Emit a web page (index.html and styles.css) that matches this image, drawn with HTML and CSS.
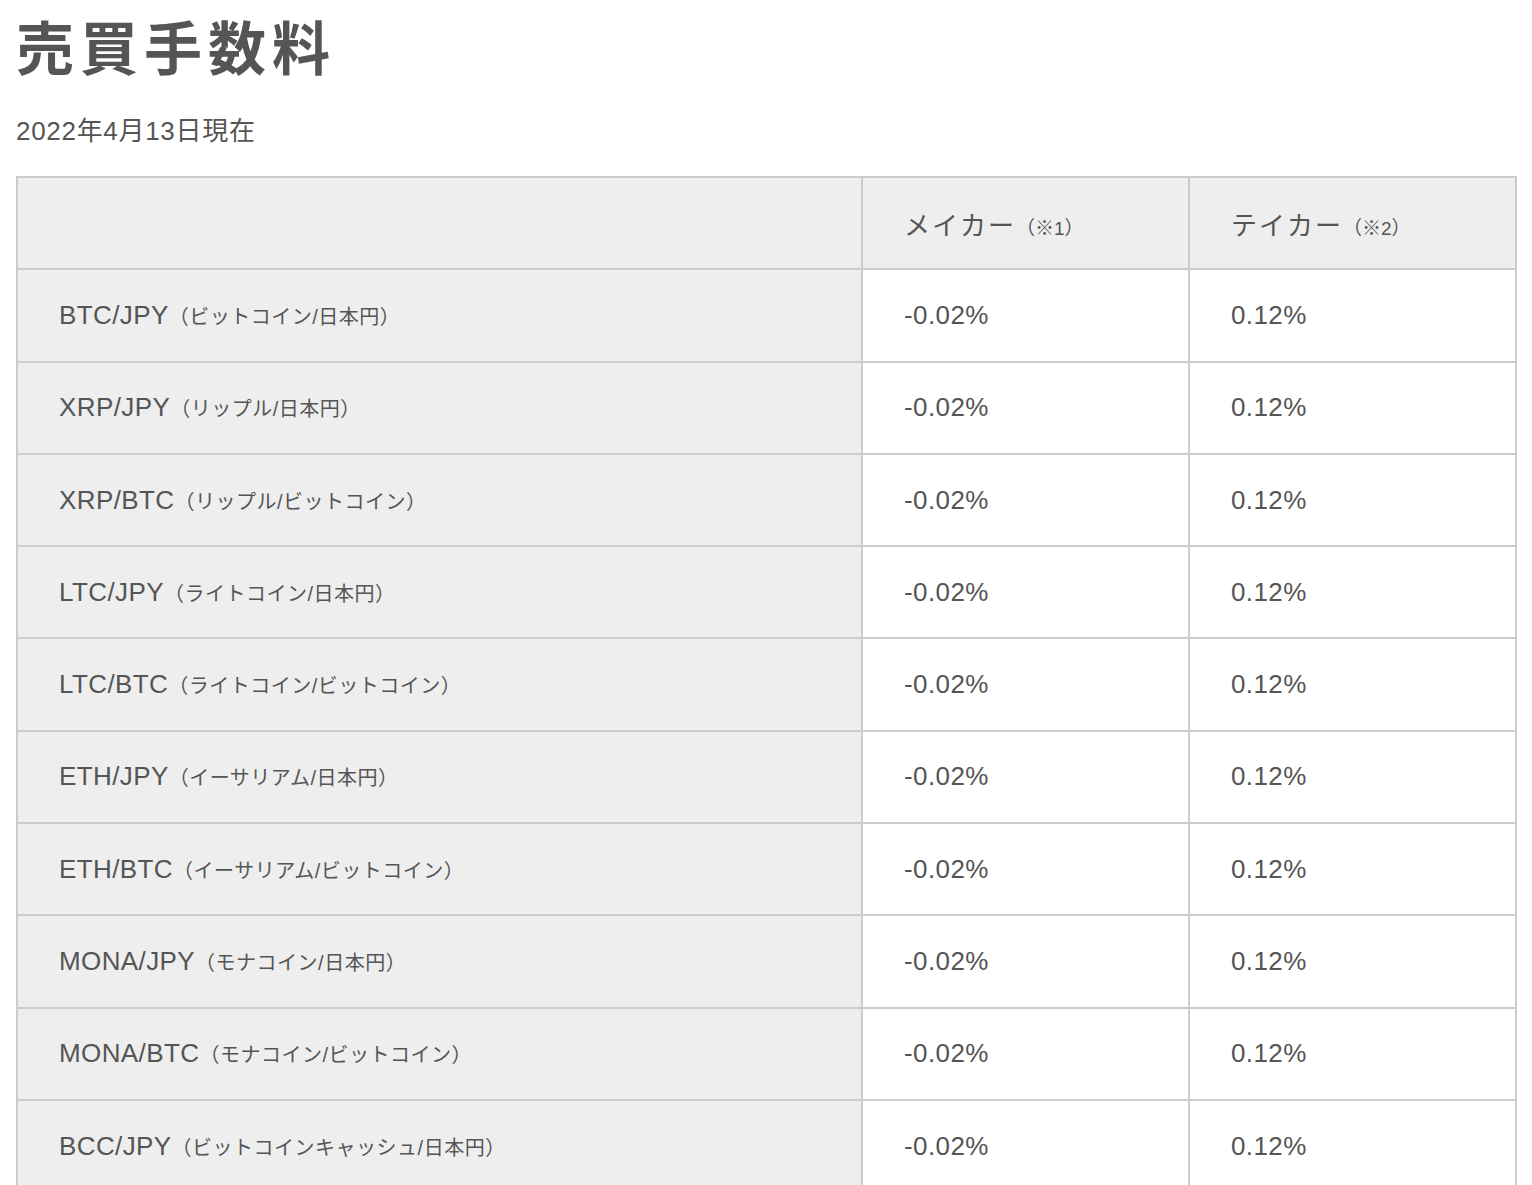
FILE: index.html
```html
<!DOCTYPE html>
<html lang="ja">
<head>
<meta charset="utf-8">
<title>売買手数料</title>
<link rel="stylesheet" href="styles.css">
</head>
<body>
<h1 class="title">売買手数料</h1>
<p class="date">2022年4月13日現在</p>
<table class="fees">
  <colgroup>
    <col class="col-pair">
    <col class="col-rate">
    <col class="col-rate">
  </colgroup>
  <thead>
    <tr>
      <th class="head-empty"></th>
      <th>メイカー<span class="note">（※1）</span></th>
      <th>テイカー<span class="note">（※2）</span></th>
    </tr>
  </thead>
  <tbody>
    <tr><th class="pair">BTC/JPY<span class="sub">（ビットコイン/日本円）</span></th><td>-0.02%</td><td>0.12%</td></tr>
    <tr><th class="pair">XRP/JPY<span class="sub">（リップル/日本円）</span></th><td>-0.02%</td><td>0.12%</td></tr>
    <tr><th class="pair">XRP/BTC<span class="sub">（リップル/ビットコイン）</span></th><td>-0.02%</td><td>0.12%</td></tr>
    <tr><th class="pair">LTC/JPY<span class="sub">（ライトコイン/日本円）</span></th><td>-0.02%</td><td>0.12%</td></tr>
    <tr><th class="pair">LTC/BTC<span class="sub">（ライトコイン/ビットコイン）</span></th><td>-0.02%</td><td>0.12%</td></tr>
    <tr><th class="pair">ETH/JPY<span class="sub">（イーサリアム/日本円）</span></th><td>-0.02%</td><td>0.12%</td></tr>
    <tr><th class="pair">ETH/BTC<span class="sub">（イーサリアム/ビットコイン）</span></th><td>-0.02%</td><td>0.12%</td></tr>
    <tr><th class="pair">MONA/JPY<span class="sub">（モナコイン/日本円）</span></th><td>-0.02%</td><td>0.12%</td></tr>
    <tr><th class="pair">MONA/BTC<span class="sub">（モナコイン/ビットコイン）</span></th><td>-0.02%</td><td>0.12%</td></tr>
    <tr><th class="pair">BCC/JPY<span class="sub">（ビットコインキャッシュ/日本円）</span></th><td>-0.02%</td><td>0.12%</td></tr>
  </tbody>
</table>
</body>
</html>
```
FILE: styles.css
```css
html, body {
  margin: 0;
  padding: 0;
  background: #fff;
}

body {
  padding: 0 18px 0 16px;
  color: #555;
  font-family: "Liberation Sans", "Noto Sans CJK JP", sans-serif;
}

.title {
  margin: 0;
  padding-top: 10px;
  font-family: "Noto Sans CJK JP", sans-serif;
  font-size: 58px;
  font-weight: 700;
  line-height: 70px;
  letter-spacing: 6px;
  color: #555;
}

.date {
  margin: 36px 0 0;
  font-size: 26px;
  line-height: 30px;
  letter-spacing: 0.7px;
}

.fees {
  margin-top: 30px;
  width: 100%;
  border-collapse: collapse;
  table-layout: fixed;
  border: 2px solid #ccc;
}

.col-pair { width: 845px; }
.col-rate { width: 327px; }

.fees th,
.fees td {
  height: 92.3px;
  padding: 0 0 0 41px;
  border: 2px solid #ccc;
  text-align: left;
  vertical-align: middle;
  font-weight: 400;
  font-size: 26px;
  letter-spacing: 0.4px;
  white-space: nowrap;
  box-sizing: border-box;
}

.fees thead th {
  background: #eee;
  font-size: 26px;
  letter-spacing: 2px;
}

.fees .pair {
  background: #eee;
}

.fees td {
  background: #fff;
}

.note {
  font-size: 19px;
  letter-spacing: 0;
}

.sub {
  font-size: 20px;
  letter-spacing: 0.5px;
}
```
